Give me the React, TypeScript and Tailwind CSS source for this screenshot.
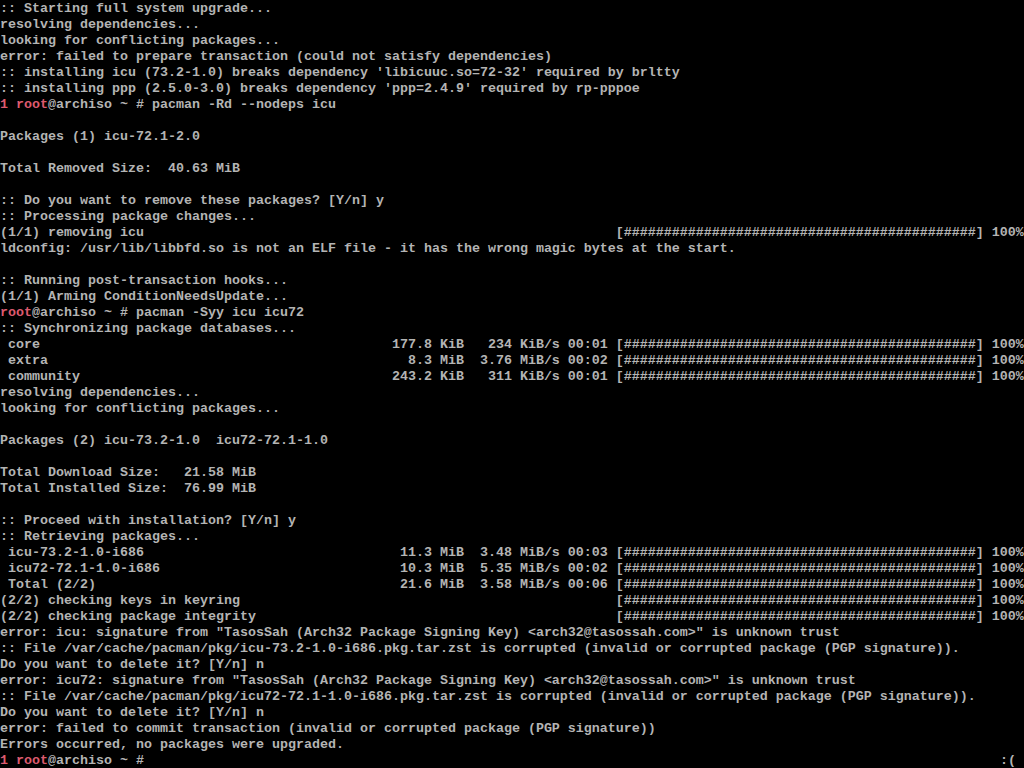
import React from "react";

// pacman progress bar, starts at column 77 of a 128 column console
const BAR = "[" + "#".repeat(44) + "] 100%";

const withBar = (left: string): string => left.padEnd(77) + BAR;

function transfer(name: string, size: string, unit: string, rate: string, rateUnit: string, time: string): string {
  const left =
    (" " + name).padEnd(48) + size.padStart(6) + " " + unit + rate.padStart(6) + " " + rateUnit + " " + time + " ";
  return withBar(left);
}

type Line = { text: string; prompt?: "exit" | "ok" };

const lines: Line[] = [
  { text: ":: Starting full system upgrade..." },
  { text: "resolving dependencies..." },
  { text: "looking for conflicting packages..." },
  { text: "error: failed to prepare transaction (could not satisfy dependencies)" },
  { text: ":: installing icu (73.2-1.0) breaks dependency 'libicuuc.so=72-32' required by brltty" },
  { text: ":: installing ppp (2.5.0-3.0) breaks dependency 'ppp=2.4.9' required by rp-pppoe" },
  { text: "pacman -Rd --nodeps icu", prompt: "exit" },
  { text: "" },
  { text: "Packages (1) icu-72.1-2.0" },
  { text: "" },
  { text: "Total Removed Size:  40.63 MiB" },
  { text: "" },
  { text: ":: Do you want to remove these packages? [Y/n] y" },
  { text: ":: Processing package changes..." },
  { text: withBar("(1/1) removing icu") },
  { text: "ldconfig: /usr/lib/libbfd.so is not an ELF file - it has the wrong magic bytes at the start." },
  { text: "" },
  { text: ":: Running post-transaction hooks..." },
  { text: "(1/1) Arming ConditionNeedsUpdate..." },
  { text: "pacman -Syy icu icu72", prompt: "ok" },
  { text: ":: Synchronizing package databases..." },
  { text: transfer("core", "177.8", "KiB", "234", "KiB/s", "00:01") },
  { text: transfer("extra", "8.3", "MiB", "3.76", "MiB/s", "00:02") },
  { text: transfer("community", "243.2", "KiB", "311", "KiB/s", "00:01") },
  { text: "resolving dependencies..." },
  { text: "looking for conflicting packages..." },
  { text: "" },
  { text: "Packages (2) icu-73.2-1.0  icu72-72.1-1.0" },
  { text: "" },
  { text: "Total Download Size:   21.58 MiB" },
  { text: "Total Installed Size:  76.99 MiB" },
  { text: "" },
  { text: ":: Proceed with installation? [Y/n] y" },
  { text: ":: Retrieving packages..." },
  { text: transfer("icu-73.2-1.0-i686", "11.3", "MiB", "3.48", "MiB/s", "00:03") },
  { text: transfer("icu72-72.1-1.0-i686", "10.3", "MiB", "5.35", "MiB/s", "00:02") },
  { text: transfer("Total (2/2)", "21.6", "MiB", "3.58", "MiB/s", "00:06") },
  { text: withBar("(2/2) checking keys in keyring") },
  { text: withBar("(2/2) checking package integrity") },
  { text: 'error: icu: signature from "TasosSah (Arch32 Package Signing Key) <arch32@tasossah.com>" is unknown trust' },
  { text: ":: File /var/cache/pacman/pkg/icu-73.2-1.0-i686.pkg.tar.zst is corrupted (invalid or corrupted package (PGP signature))." },
  { text: "Do you want to delete it? [Y/n] n" },
  { text: 'error: icu72: signature from "TasosSah (Arch32 Package Signing Key) <arch32@tasossah.com>" is unknown trust' },
  { text: ":: File /var/cache/pacman/pkg/icu72-72.1-1.0-i686.pkg.tar.zst is corrupted (invalid or corrupted package (PGP signature))." },
  { text: "Do you want to delete it? [Y/n] n" },
  { text: "error: failed to commit transaction (invalid or corrupted package (PGP signature))" },
  { text: "Errors occurred, no packages were upgraded." },
];

const Prompt: React.FC<{ failed: boolean }> = ({ failed }) => (
  <>
    <span className="text-[#dc5a6e]">{failed ? "1 root" : "root"}</span>
    <span>@archiso ~ # </span>
  </>
);

const App: React.FC = () => {
  return (
    <div
      className="w-[1024px] h-[768px] bg-black text-[#b4b4b4] overflow-hidden flex flex-col pt-px text-[13.333px] leading-4 font-bold"
      style={{ fontFamily: '"Liberation Mono", monospace' }}
    >
      {lines.map((line, i) => (
        <div key={i} className="h-4 shrink-0 whitespace-pre">
          {line.prompt && <Prompt failed={line.prompt === "exit"} />}
          {line.text}
        </div>
      ))}

      <div className="h-4 shrink-0 whitespace-pre flex justify-between">
        <div>
          <Prompt failed={true} />
        </div>
        <div>{":( "}</div>
      </div>
    </div>
  );
};

export default App;
